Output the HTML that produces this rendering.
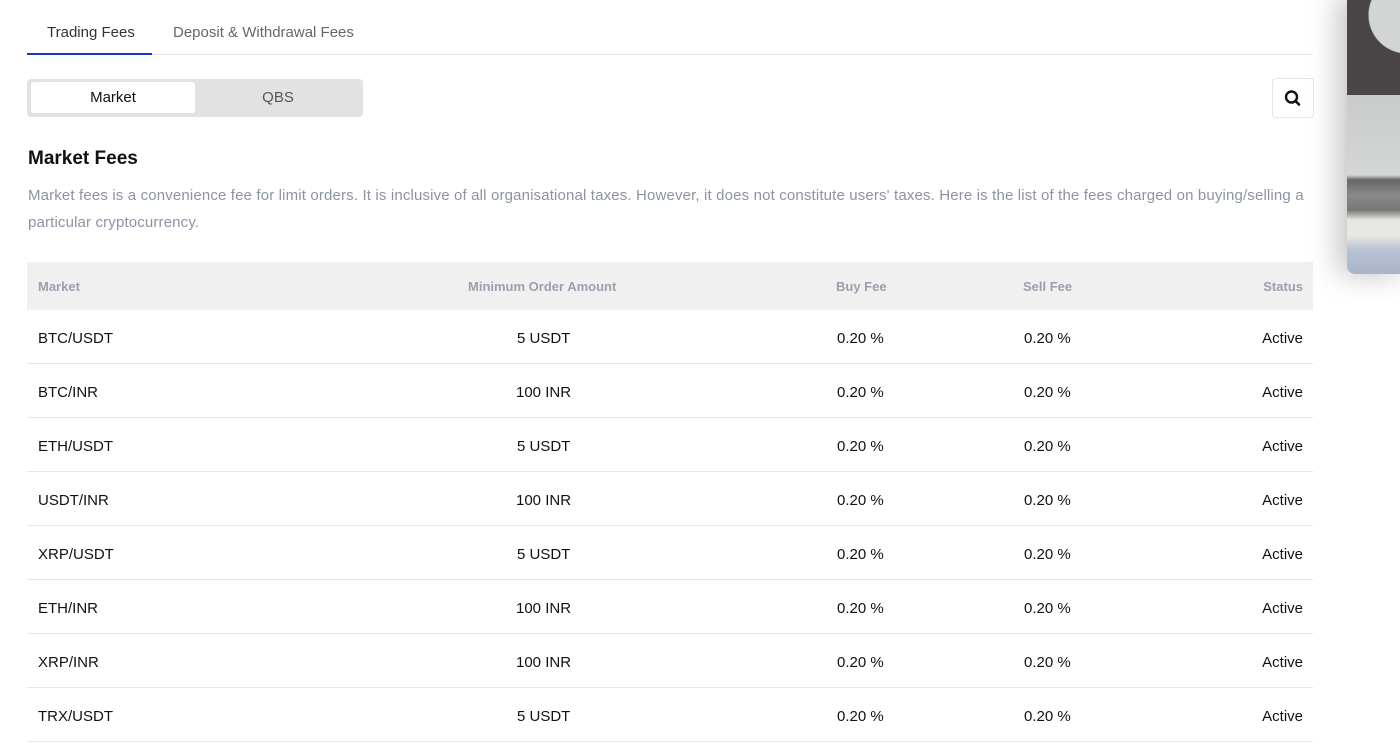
<!DOCTYPE html>
<html><head><style>
*{margin:0;padding:0;box-sizing:border-box}
body{width:1400px;height:753px;background:#fff;font-family:"Liberation Sans",sans-serif;position:relative;overflow:hidden;color:#111}
.a{position:absolute;white-space:nowrap}
.row{position:absolute;left:27px;width:1286px;height:54px;border-bottom:1px solid #e6e6e6;font-size:15px;color:#111}
.row span{position:absolute;top:20px}
.hd{position:absolute;left:27px;top:262px;width:1286px;height:48px;background:#f0f0f0;font-size:13px;font-weight:bold;color:#9aa0ad}
.hd span,.row span{position:absolute}
.hd span{top:17px}
</style></head><body>
<div class="a" style="left:47px;top:24px;font-size:15px;color:#333">Trading Fees</div>
<div class="a" style="left:173px;top:24px;font-size:15px;color:#666">Deposit &amp; Withdrawal Fees</div>
<div class="a" style="left:27px;top:54px;width:1286px;height:1px;background:#e8e8e8"></div>
<div class="a" style="left:27px;top:53px;width:125px;height:2px;background:#1a35c8"></div>
<div class="a" style="left:27px;top:79px;width:336px;height:38px;background:#e2e2e2;border-radius:4px"></div>
<div class="a" style="left:31px;top:82px;width:164px;height:31px;background:#fff;border-radius:3px;font-size:15px;text-align:center;line-height:31px;color:#111">Market</div>
<div class="a" style="left:195px;top:82px;width:166px;height:31px;font-size:15px;text-align:center;line-height:31px;color:#555">QBS</div>
<div class="a" style="left:1272px;top:78px;width:42px;height:40px;border:1px solid #e6e6e6;border-radius:4px">
<svg width="40" height="38" viewBox="0 0 40 38"><circle cx="18.5" cy="18" r="5.5" fill="none" stroke="#111" stroke-width="2.4"/><line x1="22.5" y1="22" x2="26" y2="25.5" stroke="#111" stroke-width="2.6" stroke-linecap="round"/></svg></div>
<div class="a" style="left:28px;top:148px;font-size:19px;font-weight:bold;color:#111">Market Fees</div>
<div class="a" style="left:28px;top:182px;width:1295px;font-size:15px;line-height:27px;color:#8c93a3;white-space:normal;letter-spacing:0.15px">Market fees is a convenience fee for limit orders. It is inclusive of all organisational taxes. However, it does not constitute users' taxes. Here is the list of the fees charged on buying/selling a particular cryptocurrency.</div>
<div class="hd"><span style="left:11px">Market</span><span style="left:441px">Minimum Order Amount</span><span style="left:809px">Buy Fee</span><span style="left:996px">Sell Fee</span><span style="right:10px">Status</span></div>
<div class="row" style="top:310px"><span style="left:11px">BTC/USDT</span><span style="left:490px">5 USDT</span><span style="left:810px">0.20 %</span><span style="left:997px">0.20 %</span><span style="right:10px">Active</span></div>
<div class="row" style="top:364px"><span style="left:11px">BTC/INR</span><span style="left:489px">100 INR</span><span style="left:810px">0.20 %</span><span style="left:997px">0.20 %</span><span style="right:10px">Active</span></div>
<div class="row" style="top:418px"><span style="left:11px">ETH/USDT</span><span style="left:490px">5 USDT</span><span style="left:810px">0.20 %</span><span style="left:997px">0.20 %</span><span style="right:10px">Active</span></div>
<div class="row" style="top:472px"><span style="left:11px">USDT/INR</span><span style="left:489px">100 INR</span><span style="left:810px">0.20 %</span><span style="left:997px">0.20 %</span><span style="right:10px">Active</span></div>
<div class="row" style="top:526px"><span style="left:11px">XRP/USDT</span><span style="left:490px">5 USDT</span><span style="left:810px">0.20 %</span><span style="left:997px">0.20 %</span><span style="right:10px">Active</span></div>
<div class="row" style="top:580px"><span style="left:11px">ETH/INR</span><span style="left:489px">100 INR</span><span style="left:810px">0.20 %</span><span style="left:997px">0.20 %</span><span style="right:10px">Active</span></div>
<div class="row" style="top:634px"><span style="left:11px">XRP/INR</span><span style="left:489px">100 INR</span><span style="left:810px">0.20 %</span><span style="left:997px">0.20 %</span><span style="right:10px">Active</span></div>
<div class="row" style="top:688px"><span style="left:11px">TRX/USDT</span><span style="left:490px">5 USDT</span><span style="left:810px">0.20 %</span><span style="left:997px">0.20 %</span><span style="right:10px">Active</span></div>
<div class="a" style="left:1347px;top:-5px;width:60px;height:279px;border-radius:0 0 0 8px;box-shadow:-8px 0 30px rgba(0,0,0,0.25);overflow:hidden;background:linear-gradient(180deg,#4a4648 0px,#4a4648 80px,#c9cbcb 95px,#d4d6d6 180px,#666 185px,#8a8a8a 200px,#777 215px,#e6e6e2 225px,#e8e8e4 240px,#b9c2d4 255px,#aab4c8 279px)">
<div style="position:absolute;left:0;top:0;width:60px;height:100px;background:radial-gradient(circle at 60px 20px,#d3d5d5 0 38px,#4a4648 39px)"></div></div>
</body></html>
